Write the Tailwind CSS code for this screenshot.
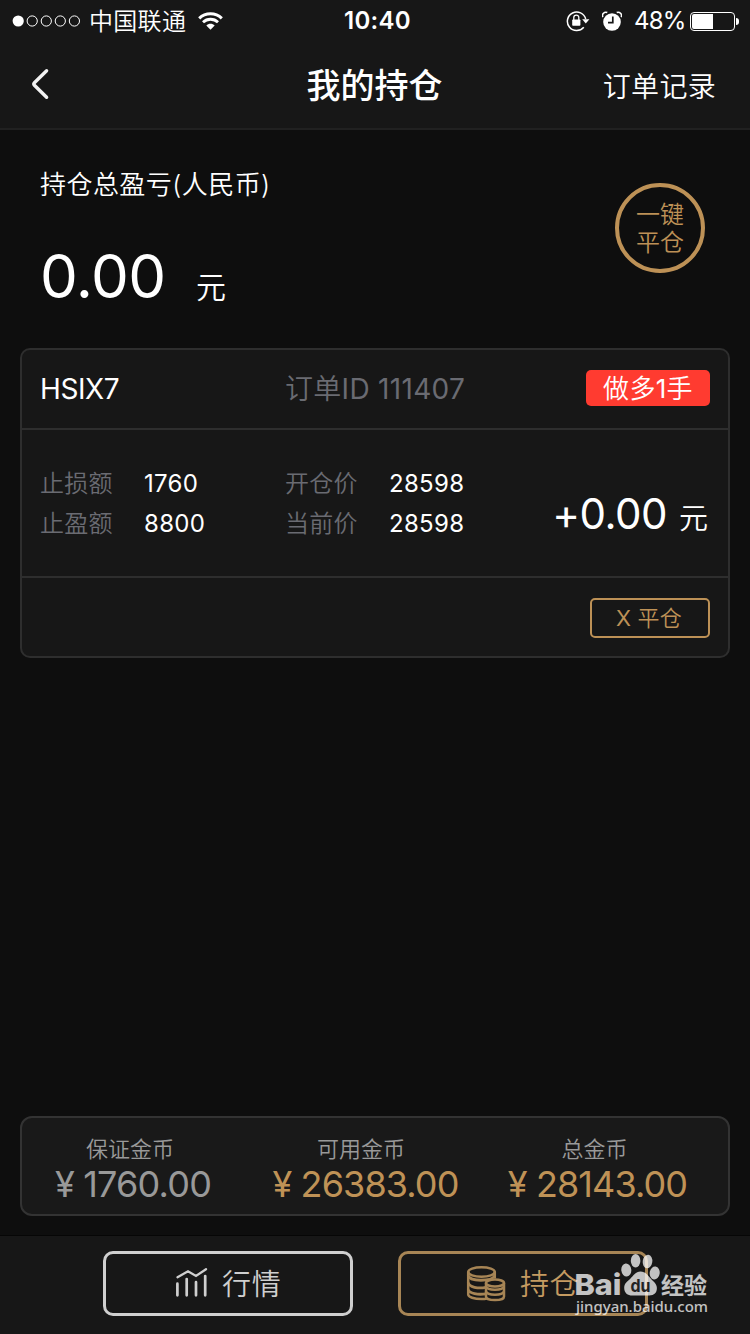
<!DOCTYPE html>
<html lang="zh-CN">
<head>
<meta charset="utf-8">
<title>我的持仓</title>
<script src="https://cdn.jsdelivr.net/npm/@tailwindcss/browser@4"></script>
</head>
<body class="bg-[#0f0f0f]">
<div class="relative flex flex-col w-[750px] h-[1334px] overflow-hidden bg-[#0e0e0e] text-white font-[350] font-['Inter','Noto_Sans_CJK_SC',sans-serif] whitespace-nowrap">

  <header class="h-[130px] bg-[#171717] border-b-2 border-[#212121]">
    <div class="grid grid-cols-3 h-10 items-center pt-px">
      <div class="flex items-center pl-3">
        <svg class="w-[70px] h-3" viewBox="0 0 70 12" fill="none" stroke="#fff" stroke-width="1"><circle cx="6.2" cy="6" r="5.6" fill="#fff" stroke="none"/><circle cx="20.2" cy="6" r="5.1"/><circle cx="34.3" cy="6" r="5.1"/><circle cx="48.3" cy="6" r="5.1"/><circle cx="62.4" cy="6" r="5.1"/></svg>
        <span class="ml-[7px] pt-[2px] text-[24px] leading-[38px] tracking-[0.3px]">中国联通</span>
        <svg class="ml-3 w-[25px] h-[18px]" viewBox="0 0 25 18" fill="none" stroke="#fff" stroke-width="3"><path d="M1.2 6.4C7.5.2 17.500.2 23.800 6.400"/><path d="M5 10.300c4.200-4.100 10.800-4.100 15 0" stroke-width="2.800"/><path d="M12.500 17.700 8.300 13.500c2.300-2.200 6.100-2.200 8.400 0Z" fill="#fff" stroke="none"/></svg>
      </div>
      <div class="text-center text-[24px] leading-10 font-semibold tracking-[0.3px] pl-[5px]">10:40</div>
      <div class="flex items-center justify-end pr-[11px]">
        <svg class="w-6 h-[22px]" viewBox="0 0 24 22"><path d="M17.800 17.300A9.300 9.300 0 1 1 19.700 9" fill="none" stroke="#fff" stroke-width="1.500"/><path d="M16.200 9.300h7.200l-3.600 4.300Z" fill="#fff"/><rect x="6.200" y="9.500" width="8.200" height="6.300" rx=".8" fill="#fff"/><path d="M7.800 10V7.600a2.500 2.500 0 0 1 5 0V10" fill="none" stroke="#fff" stroke-width="1.300"/></svg>
        <svg class="ml-3 w-5 h-[21px]" viewBox="0 0 20 21"><circle cx="10" cy="11" r="8.800" fill="#fff"/><path d="M.8 6.100A3.400 3.400 0 0 1 5.300 1.600M19.200 6.100A3.400 3.400 0 0 0 14.700 1.600" fill="none" stroke="#fff" stroke-width="1.600"/><path d="M10.800 5.500v6.200H6" fill="none" stroke="#171717" stroke-width="1.700"/></svg>
        <span class="ml-3 text-[24px] leading-10 w-[51px] font-normal tracking-[-0.8px]">48%</span>
        <div class="ml-[5px] w-[45px] h-[19px] rounded-[4px] border border-white p-px"><div class="h-full w-[21px] bg-white rounded-l-[2px]"></div></div>
        <div class="ml-px w-[3px] h-[7px] rounded-r-full bg-white"></div>
      </div>
    </div>
    <div class="grid grid-cols-3 h-[88px] items-center">
      <svg class="ml-[30px] w-5 h-8" viewBox="0 0 20 32" fill="none" stroke="#f2f2f2" stroke-width="3.400" stroke-linecap="round" stroke-linejoin="round"><path d="M16.600 2.700 4.400 14.700q-1.300 1.300 0 2.600L16.600 29.300"/></svg>
      <h1 class="text-center text-[34px] leading-[48px] font-medium pt-[3px] pr-px">我的持仓</h1>
      <div class="text-right pr-[34px] pt-[6px] text-[28px] leading-10 tracking-[0.3px]">订单记录</div>
    </div>
  </header>

  <section class="flex justify-between h-[218px] pl-10 pr-[45px]">
    <div class="pt-[35px]">
      <div class="text-[26px] leading-10 tracking-[0.45px]">持仓总盈亏(人民币)</div>
      <div class="flex pt-9">
        <span class="w-[156px] text-[60px] leading-[70px] font-normal tracking-[-0.6px]">0.00</span>
        <span class="pt-[22px] text-[30px] leading-[48px]">元</span>
      </div>
    </div>
    <button class="mt-[53px] size-[90px] rounded-full border-4 border-[#bd9156] text-[#bd9156] text-[24px] leading-7 font-[350] pt-[2px]">一键<br>平仓</button>
  </section>

  <article class="flex flex-col mx-5 h-[310px] rounded-[10px] border-2 border-[#2e2e2e] bg-[#171717]">
    <div class="flex items-center h-[80px] border-b-2 border-[#2e2e2e] pl-[18px] pr-[18px] text-[28px]">
      <span class="w-[245px] font-normal tracking-[-0.4px]">HSIX7</span>
      <span class="flex-1 text-[#6a6b72] tracking-[0.3px]">订单<span class="font-normal">ID 111407</span></span>
      <span class="w-[124px] h-9 -mt-[2px] rounded-[5px] bg-[#ff3b30] text-center text-[26px] leading-[37px] tracking-[0.3px]">做多<span class="font-normal">1</span>手</span>
    </div>
    <div class="flex h-[148px] border-b-2 border-[#2e2e2e] pl-[18px] pr-5 pt-[34px] text-[24px] leading-10">
      <div class="grid grid-cols-[104px_141px_104px_110px] content-start tracking-[0.3px]">
        <span class="text-[#6a6b72]">止损额</span><span class="font-normal">1760</span><span class="text-[#6a6b72]">开仓价</span><span class="font-normal">28598</span>
        <span class="text-[#6a6b72]">止盈额</span><span class="font-normal">8800</span><span class="text-[#6a6b72]">当前价</span><span class="font-normal">28598</span>
      </div>
      <div class="flex flex-1 justify-end">
        <span class="pt-[25px] text-[42px] leading-[50px] font-normal tracking-[-0.5px]">+0.00</span>
        <span class="pl-3 pt-[31px] text-[29px] leading-[48px]">元</span>
      </div>
    </div>
    <div class="flex flex-1 items-center justify-end pr-[18px] pt-[2px]">
      <button class="w-[120px] h-10 rounded-[5px] border-2 border-[#bd9156] text-[#bd9156] text-[22px] leading-9 pr-[2px] font-[350] tracking-[0.2px]"><span class="font-normal">X</span> 平仓</button>
    </div>
  </article>

  <div class="flex-1"></div>

  <section class="grid grid-cols-[220px_244px_220px] mx-5 mb-5 h-[100px] rounded-xl border-2 border-[#333] bg-[#191919] text-center text-[#999]">
    <div class="pt-[17px]"><div class="text-[22px] leading-[29px] pr-1">保证金币</div><div class="text-[36px] leading-10 pl-[2px] font-normal tracking-[-0.8px]">¥ 1760.00</div></div>
    <div class="pt-[17px]"><div class="text-[22px] leading-[29px] pr-[6px]">可用金币</div><div class="text-[36px] leading-10 pl-[3px] font-normal tracking-[-0.9px] text-[#bf9256]">¥ 26383.00</div></div>
    <div class="pt-[17px]"><div class="text-[22px] leading-[29px] pr-[3px]">总金币</div><div class="text-[36px] leading-10 pl-[3px] font-normal tracking-[-0.9px] text-[#bf9256]">¥ 28143.00</div></div>
  </section>

  <nav class="flex h-[98px] gap-[45px] pl-[103px] pt-[15px] bg-[#171717] shadow-[0_-1px_0_#060606]">
    <button class="flex items-center w-[250px] h-[65px] rounded-[10px] border-3 border-[#cfcfcf] pl-[69px] text-[#cfcfcf] text-[29px] font-[350]">
      <svg class="w-9 h-8" viewBox="0 0 36 32" fill="none" stroke="#cfcfcf" stroke-width="2.700" stroke-linecap="round"><path d="M2.500 9.300 13 3.300l8 4.700L31 1.200" stroke-width="2.300"/><path d="M2.400 15.700v11.600M11.700 11v16.300M21 14.200v13.100M30.200 8v19.300"/></svg>
      <span class="ml-[11px] pt-[2px] leading-[58px] tracking-[0.7px]">行情</span>
    </button>
    <button class="flex items-center w-[250px] h-[65px] rounded-[10px] border-3 border-[#a78555] pl-[65px] text-[#c59b61] text-[29px] font-[350]">
      <svg class="w-10 h-9" viewBox="0 0 40 36" fill="none" stroke="#a78555" stroke-width="2.500"><ellipse cx="15.500" cy="6" rx="13.300" ry="4.700"/><path d="M2.200 6v22.500c0 2.600 6 4.600 13.300 4.600 2 0 4-.2 5.200-.6M28.800 6v6.500"/><path d="M2.200 9.500c1 6.300 24 6.300 26.600 0M2.200 16.500c1 4.800 10 6.300 17.500 4.900M2.200 23.500c1 4 10 5.500 17.500 4.300" stroke-width="2.800"/><path d="M20 17v13.500c0 2 3.500 3.600 9 3.600s9-1.600 9-3.600V17" fill="#171717"/><ellipse cx="29" cy="17" rx="9" ry="3.500" fill="#171717"/><path d="M20 20.500c1.500 4.300 16.500 4.300 18 0M20 25.500c1.500 4.300 16.500 4.300 18 0" stroke-width="2.400"/></svg>
      <span class="ml-[14px] pt-[2px] leading-[58px] tracking-[0.5px]">持仓</span>
    </button>
  </nav>

  <svg class="absolute left-[560px] top-[1244px] w-[160px] h-[80px]" viewBox="560 1244 160 80">
    <g fill="#fff" opacity=".74">
      <ellipse cx="626.300" cy="1270" rx="5" ry="6.500" transform="rotate(-6 626.300 1270)"/><ellipse cx="635.600" cy="1260.700" rx="4.800" ry="6.700"/><ellipse cx="647.500" cy="1261.500" rx="4.800" ry="6.700" transform="rotate(8 647.500 1261.500)"/><ellipse cx="654.700" cy="1273" rx="5" ry="6.500" transform="rotate(8 654.700 1273)"/>
      <path d="M640.500 1271.500c-5 0-7 4-10 7-3.500 3.200-6.300 5-6.300 9.500 0 5 3.500 7.500 8 7.500h17c5 0 7.700-2.800 7.700-7.500 0-4.300-3.500-6.300-6.200-9.500-3-3.300-5.200-7-10.200-7Z"/>
      <text x="574.500" y="1295" font-family="Inter" font-weight="800" font-size="29" textLength="47" lengthAdjust="spacingAndGlyphs">Bai</text>
      <text x="661" y="1294" font-family="Noto Sans CJK SC" font-weight="700" font-size="23" textLength="46">经验</text>
      <text x="576" y="1312" font-family="Noto Sans, sans-serif" font-weight="500" font-size="15" textLength="132" lengthAdjust="spacingAndGlyphs">jingyan.baidu.com</text>
    </g>
    <text x="630.500" y="1291.500" font-family="Inter" font-weight="700" font-size="18" fill="#222" textLength="20" lengthAdjust="spacingAndGlyphs">du</text>
  </svg>
</div>
</body>
</html>
